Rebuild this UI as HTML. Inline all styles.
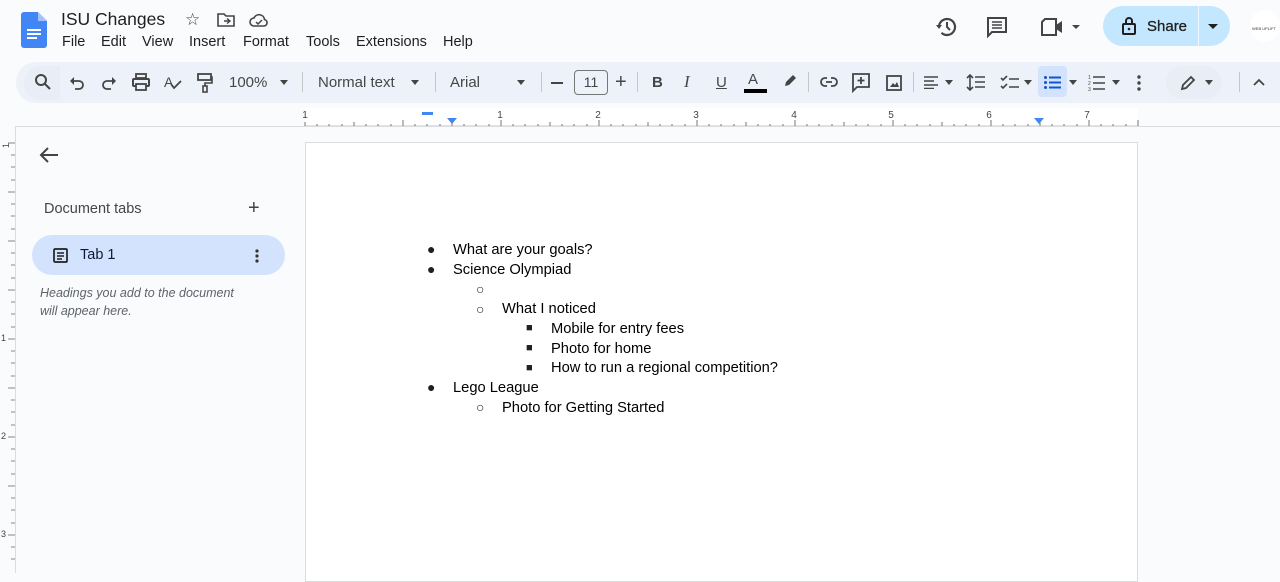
<!DOCTYPE html>
<html><head><meta charset="utf-8"><style>
*{margin:0;padding:0;box-sizing:border-box}
body{width:1280px;height:573px;overflow:hidden;background:#f9fbfd;font-family:"Liberation Sans",Arial,sans-serif;color:#1f1f1f;position:relative}
.a{position:absolute}
.tb{position:absolute;top:62px;left:16px;width:1264px;height:41px;background:#edf2fa;border-radius:20px 0 0 20px}
.ic{position:absolute;top:73px}
.sep{position:absolute;top:72px;width:1px;height:20px;background:#c7c7c7}
.t{font-size:15px;color:#444746;position:absolute;top:74px}
.doc{position:absolute;font-size:14.7px;color:#000}
.b{position:absolute;font-size:14px}
</style></head><body>
<svg class="a" style="left:21px;top:12px" width="26" height="36" viewBox="0 0 26 36"><path d="M3 0h14l9 9v24a3 3 0 0 1-3 3H3a3 3 0 0 1-3-3V3a3 3 0 0 1 3-3z" fill="#4285f4"/><path d="M17 0v9h9z" fill="#a1c2fa"/><rect x="6" y="17" width="14" height="2" fill="#fff"/><rect x="6" y="21" width="14" height="2" fill="#fff"/><rect x="6" y="25" width="10" height="2" fill="#fff"/></svg>
<div class="a" style="left:61px;top:9px;font-size:17.5px">ISU Changes</div>
<div class="a" style="left:185px;top:10px;font-size:17px;color:#444">☆</div>
<svg class="a" style="left:217px;top:12px" width="18" height="16" viewBox="0 0 18 16"><path d="M1 2h6l2 2h8v10H1z" fill="none" stroke="#444" stroke-width="1.6"/><path d="M7 9h6M10 6.5l3 2.5-3 2.5" fill="none" stroke="#444" stroke-width="1.4"/></svg>
<svg class="a" style="left:249px;top:12px" width="20" height="16" viewBox="0 0 20 16"><path d="M5 14a4 4 0 0 1 0-8 5.5 5.5 0 0 1 10.5 1.5A3.3 3.3 0 0 1 15 14z" fill="none" stroke="#444" stroke-width="1.6"/><path d="M7 10l2 2 4-4" fill="none" stroke="#444" stroke-width="1.5"/></svg>
<div class="a" style="left:62px;top:34px;font-size:14.5px">
<span class="a" style="left:0">File</span><span class="a" style="left:39px">Edit</span><span class="a" style="left:80px">View</span><span class="a" style="left:127px">Insert</span><span class="a" style="left:181px">Format</span><span class="a" style="left:244px">Tools</span><span class="a" style="left:294px">Extensions</span><span class="a" style="left:381px">Help</span></div>
<svg class="a" style="left:935px;top:15px" width="24" height="24" viewBox="0 0 24 24"><path d="M4 12a8 8 0 1 1 2.5 5.8" fill="none" stroke="#444" stroke-width="2.2"/><path d="M1 10l3 4 3-4z" fill="#444"/><path d="M12 7v5l3 3" fill="none" stroke="#444" stroke-width="2"/></svg>
<svg class="a" style="left:986px;top:16px" width="22" height="22" viewBox="0 0 22 22"><path d="M2 2h18v14H6l-4 4z" fill="none" stroke="#444" stroke-width="2"/><path d="M6 6h10M6 9h10M6 12h10" stroke="#444" stroke-width="1.6"/></svg>
<svg class="a" style="left:1040px;top:17px" width="44" height="20" viewBox="0 0 44 20"><path d="M2 5l3-3h11v16H2z" fill="none" stroke="#444" stroke-width="2"/><path d="M16 8l6-4v12l-6-4z" fill="#444"/><path d="M32 8h8l-4 4z" fill="#444"/></svg>
<div class="a" style="left:1103px;top:6px;width:127px;height:40px;border-radius:20px;background:#c2e7ff"></div>
<div class="a" style="left:1198px;top:6px;width:1px;height:40px;background:#f0f8ff"></div>
<svg class="a" style="left:1121px;top:16px" width="16" height="20" viewBox="0 0 16 20"><rect x="2" y="8" width="12" height="10" rx="1" fill="none" stroke="#1f1f1f" stroke-width="2"/><path d="M5 8V5a3 3 0 0 1 6 0v3" fill="none" stroke="#1f1f1f" stroke-width="2"/><circle cx="8" cy="13" r="1.3" fill="#1f1f1f"/></svg>
<div class="a" style="left:1147px;top:18px;font-size:15px;color:#1f1f1f;-webkit-text-stroke:0.3px #1f1f1f">Share</div>
<div class="a" style="left:1208px;top:24px;border:5px solid transparent;border-top:5px solid #1f1f1f"></div>
<div class="a" style="left:1250px;top:10px;width:30px;height:32px;border-radius:50%;background:#fff"></div>
<div class="a" style="left:1252px;top:26px;font-size:4px;color:#333">WEB UPLIFT</div>
<div class="tb"></div>
<div class="a" style="left:24px;top:66px;width:36px;height:34px;background:#e9eef6;border-radius:17px 0 0 17px"></div>
<svg class="ic" style="left:34px" width="18" height="18" viewBox="0 0 18 18"><circle cx="7" cy="7" r="5" fill="none" stroke="#444" stroke-width="2"/><path d="M11 11l5 5" stroke="#444" stroke-width="2"/></svg>
<svg class="ic" style="left:69px;top:75px" width="16" height="16" viewBox="0 0 16 16"><path d="M4 6h6a4 4 0 0 1 0 8H6" fill="none" stroke="#444" stroke-width="1.8"/><path d="M1 6l4-4v8z" fill="#444"/></svg>
<svg class="ic" style="left:101px;top:75px" width="16" height="16" viewBox="0 0 16 16"><path d="M12 6H6a4 4 0 0 0 0 8h4" fill="none" stroke="#444" stroke-width="1.8"/><path d="M15 6l-4-4v8z" fill="#444"/></svg>
<svg class="ic" style="left:132px" width="18" height="18" viewBox="0 0 18 18"><rect x="1" y="6" width="16" height="7" rx="1" fill="none" stroke="#444" stroke-width="2"/><rect x="4" y="1" width="10" height="4" fill="none" stroke="#444" stroke-width="1.8"/><rect x="4" y="11" width="10" height="6" fill="#edf2fa" stroke="#444" stroke-width="1.8"/></svg>
<div class="t" style="left:164px;font-size:14px">A</div><svg class="ic" style="left:170px;top:80px" width="12" height="10"><path d="M1 4l3 4 7-7" fill="none" stroke="#444" stroke-width="1.8"/></svg>
<svg class="ic" style="left:197px" width="16" height="20" viewBox="0 0 16 20"><rect x="1" y="1" width="13" height="6" fill="none" stroke="#444" stroke-width="1.8"/><path d="M14 4h1v6H8v3" fill="none" stroke="#444" stroke-width="1.6"/><rect x="6" y="13" width="4" height="6" fill="none" stroke="#444" stroke-width="1.6"/></svg>
<div class="t" style="left:229px">100%</div><div class="a" style="left:280px;top:80px;border:4px solid transparent;border-top:5px solid #444"></div>
<div class="sep" style="left:302px"></div>
<div class="t" style="left:318px">Normal text</div><div class="a" style="left:411px;top:80px;border:4px solid transparent;border-top:5px solid #444"></div>
<div class="sep" style="left:435px"></div>
<div class="t" style="left:450px">Arial</div><div class="a" style="left:517px;top:80px;border:4px solid transparent;border-top:5px solid #444"></div>
<div class="sep" style="left:541px"></div>
<div class="a" style="left:551px;top:82px;width:12px;height:2px;background:#444"></div>
<div class="a" style="left:574px;top:70px;width:34px;height:25px;border:1px solid #747775;border-radius:4px;font-size:14px;text-align:center;line-height:23px;color:#444">11</div>
<div class="t" style="left:615px;top:71px;font-size:20px">+</div>
<div class="sep" style="left:637px"></div>
<div class="t" style="left:652px;font-weight:bold">B</div>
<div class="t" style="left:684px;font-style:italic;font-family:'Liberation Serif',serif;font-size:17px;top:72px">I</div>
<div class="t" style="left:716px;text-decoration:underline">U</div>
<div class="t" style="left:748px;top:71px">A</div><div class="a" style="left:744px;top:89px;width:23px;height:4px;background:#000"></div>
<svg class="ic" style="left:782px" width="16" height="16" viewBox="0 0 16 16"><path d="M3 13l1-4 7-7 3 3-7 7z" fill="#444"/></svg>
<div class="sep" style="left:808px"></div>
<svg class="ic" style="left:820px;top:76px" width="18" height="12" viewBox="0 0 18 12"><path d="M7 2H5a4 4 0 0 0 0 8h2M11 2h2a4 4 0 0 1 0 8h-2M6 6h6" fill="none" stroke="#444" stroke-width="1.8"/></svg>
<svg class="ic" style="left:852px" width="18" height="20" viewBox="0 0 18 20"><path d="M1 1h16v13H5l-4 4z" fill="none" stroke="#444" stroke-width="1.8"/><path d="M9 4v7M5.5 7.5h7" stroke="#444" stroke-width="1.8"/></svg>
<svg class="ic" style="left:886px;top:75px" width="16" height="16" viewBox="0 0 16 16"><rect x="1" y="1" width="14" height="14" fill="none" stroke="#444" stroke-width="1.8"/><path d="M4 12l3-4 2 2 2-3 2 5z" fill="#444"/></svg>
<div class="sep" style="left:913px"></div>
<svg class="ic" style="left:924px;top:76px" width="14" height="13"><path d="M0 1h14M0 5h10M0 9h14M0 12.5h10" stroke="#444" stroke-width="1.6"/></svg><div class="a" style="left:945px;top:80px;border:4px solid transparent;border-top:5px solid #444"></div>
<svg class="ic" style="left:966px;top:74px" width="20" height="17"><path d="M4 1v15M1 4l3-3 3 3M1 13l3 3 3-3M9 3h10M9 8h10M9 13h10" fill="none" stroke="#444" stroke-width="1.6"/></svg>
<svg class="ic" style="left:1000px;top:75px" width="20" height="15"><path d="M1 3l2 2 4-4M1 11l2 2 4-4M9 4h10M9 12h10" fill="none" stroke="#444" stroke-width="1.6"/></svg><div class="a" style="left:1024px;top:80px;border:4px solid transparent;border-top:5px solid #444"></div>
<div class="a" style="left:1038px;top:66px;width:29px;height:31px;background:#d3e3fd;border-radius:4px"></div>
<svg class="ic" style="left:1044px;top:76px" width="17" height="13"><circle cx="1.5" cy="1.5" r="1.5" fill="#0b57d0"/><circle cx="1.5" cy="6.5" r="1.5" fill="#0b57d0"/><circle cx="1.5" cy="11.5" r="1.5" fill="#0b57d0"/><path d="M5 1.5h12M5 6.5h12M5 11.5h12" stroke="#0b57d0" stroke-width="2"/></svg>
<div class="a" style="left:1069px;top:80px;border:4px solid transparent;border-top:5px solid #444"></div>
<svg class="ic" style="left:1088px;top:74px" width="18" height="17"><text x="0" y="5" font-size="5" fill="#444">1</text><text x="0" y="11" font-size="5" fill="#444">2</text><text x="0" y="17" font-size="5" fill="#444">3</text><path d="M5 3h12M5 9h12M5 15h12" stroke="#444" stroke-width="1.6"/></svg>
<div class="a" style="left:1112px;top:80px;border:4px solid transparent;border-top:5px solid #444"></div>
<svg class="ic" style="left:1137px;top:75px" width="4" height="16"><circle cx="2" cy="2" r="1.7" fill="#444"/><circle cx="2" cy="8" r="1.7" fill="#444"/><circle cx="2" cy="14" r="1.7" fill="#444"/></svg>
<div class="a" style="left:1166px;top:66px;width:56px;height:33px;background:#e9eef6;border-radius:17px"></div>
<svg class="ic" style="left:1180px;top:75px" width="16" height="16"><path d="M2 14l1-4 8-8 3 3-8 8z" fill="none" stroke="#444" stroke-width="1.8"/></svg>
<div class="a" style="left:1205px;top:80px;border:4px solid transparent;border-top:5px solid #444"></div>
<div class="sep" style="left:1239px"></div>
<svg class="ic" style="left:1253px;top:78px" width="12" height="8"><path d="M1 7l5-5 5 5" fill="none" stroke="#444" stroke-width="1.8"/></svg>
<div class="a" style="left:305px;top:108px;width:833px;height:18px;background:#fff"></div>
<svg class="a" style="left:300px;top:106px" width="845" height="22">
<g font-size="10" fill="#444" font-family="Liberation Sans" text-anchor="middle"><text x="5" y="12">1</text><text x="200" y="12">1</text><text x="298" y="12">2</text><text x="396" y="12">3</text><text x="494" y="12">4</text><text x="591" y="12">5</text><text x="689" y="12">6</text><text x="787" y="12">7</text></g>
<rect x="122" y="6" width="11" height="3" fill="#4285f4"/><path d="M147 12h10l-5 6z" fill="#4285f4"/><path d="M734 12h10l-5 6z" fill="#4285f4"/>
<path d="M5 20h833" stroke="#c7c7c7"/>
<g stroke="#777"><path d="M5 16v4M17 18v2M29 18v2M42 18v2M54 16v4M66 18v2M78 18v2M91 18v2M103 14v6M115 18v2M127 18v2M140 18v2M152 16v4M164 18v2M176 18v2M189 18v2M201 14v6M213 18v2M225 18v2M238 18v2M250 16v4M262 18v2M274 18v2M287 18v2M299 14v6M311 18v2M323 18v2M336 18v2M348 16v4M360 18v2M372 18v2M385 18v2M397 14v6M409 18v2M421 18v2M434 18v2M446 16v4M458 18v2M470 18v2M483 18v2M495 14v6M507 18v2M519 18v2M532 18v2M544 16v4M556 18v2M568 18v2M581 18v2M593 14v6M605 18v2M617 18v2M630 18v2M642 16v4M654 18v2M666 18v2M679 18v2M691 14v6M703 18v2M715 18v2M728 18v2M740 16v4M752 18v2M764 18v2M777 18v2M789 14v6M801 18v2M813 18v2M826 18v2M838 14v6"/></g></svg>
<div class="a" style="left:15px;top:126px;width:1265px;height:1px;background:#dadce0"></div>
<div class="a" style="left:15px;top:127px;width:1px;height:446px;background:#dadce0"></div>
<svg class="a" style="left:0;top:127px" width="15" height="446"><g stroke="#888"><path d="M8 16h7M11 28h4M11 40h4M11 53h4M8 65h7M11 77h4M11 89h4M11 102h4M8 114h7M11 126h4M11 138h4M11 151h4M8 163h7M11 175h4M11 187h4M11 200h4M8 212h7M11 224h4M11 236h4M11 249h4M8 261h7M11 273h4M11 285h4M11 298h4M8 310h7M11 322h4M11 334h4M11 347h4M8 359h7M11 371h4M11 383h4M11 396h4M8 408h7M11 420h4M11 432h4"/></g>
<g font-size="9" fill="#444"><text x="1" y="21" transform="rotate(-90 5 17)">1</text><text x="1" y="214">1</text><text x="1" y="312">2</text><text x="1" y="410">3</text></g></svg>
<svg class="a" style="left:39px;top:146px" width="20" height="18"><path d="M19 9H3M9 2L2 9l7 7" fill="none" stroke="#444" stroke-width="2"/></svg>
<div class="a" style="left:44px;top:201px;font-size:14.5px;color:#444746">Document tabs</div>
<div class="a" style="left:248px;top:197px;font-size:20px;color:#444">+</div>
<div class="a" style="left:32px;top:235px;width:253px;height:40px;background:#d3e3fd;border-radius:20px"></div>
<svg class="a" style="left:53px;top:248px" width="15" height="15"><rect x="1" y="1" width="13" height="13" rx="1" fill="none" stroke="#1f1f1f" stroke-width="1.7"/><path d="M4 5h7M4 8h7M4 11h5" stroke="#1f1f1f" stroke-width="1.4"/></svg>
<div class="a" style="left:80px;top:247px;font-size:14.5px;color:#0b1a3a">Tab 1</div>
<svg class="a" style="left:255px;top:249px" width="4" height="14"><circle cx="2" cy="2" r="1.6" fill="#333"/><circle cx="2" cy="7" r="1.6" fill="#333"/><circle cx="2" cy="12" r="1.6" fill="#333"/></svg>
<div class="a" style="left:40px;top:284px;font-size:12.5px;font-style:italic;color:#5f6368;line-height:18px">Headings you add to the document<br>will appear here.</div>
<div class="a" style="left:305px;top:142px;width:833px;height:440px;background:#fff;border:1px solid #dadce0"></div>
<div class="b" style="left:427px;top:241px">●</div><div class="doc" style="left:453px;top:242px">What are your goals?</div>
<div class="b" style="left:427px;top:261px">●</div><div class="doc" style="left:453px;top:262px">Science Olympiad</div>
<div class="b" style="left:476px;top:281px">○</div>
<div class="b" style="left:476px;top:301px">○</div><div class="doc" style="left:502px;top:301px">What I noticed</div>
<div class="b" style="left:526px;top:322px;font-size:11px">■</div><div class="doc" style="left:551px;top:321px">Mobile for entry fees</div>
<div class="b" style="left:526px;top:342px;font-size:11px">■</div><div class="doc" style="left:551px;top:341px">Photo for home</div>
<div class="b" style="left:526px;top:362px;font-size:11px">■</div><div class="doc" style="left:551px;top:360px">How to run a regional competition?</div>
<div class="b" style="left:427px;top:379px">●</div><div class="doc" style="left:453px;top:380px">Lego League</div>
<div class="b" style="left:476px;top:399px">○</div><div class="doc" style="left:502px;top:400px">Photo for Getting Started</div>
</body></html>
